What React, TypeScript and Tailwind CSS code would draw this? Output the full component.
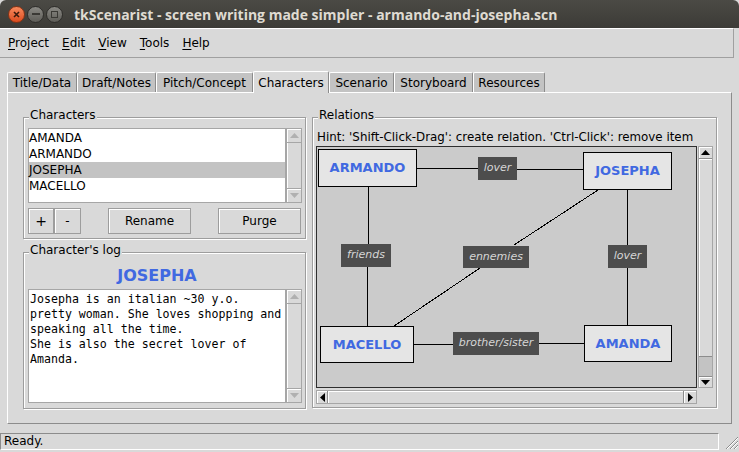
import type { ReactNode } from 'react'

const menus = ['Project', 'Edit', 'View', 'Tools', 'Help']

const tabs = [
  { name: 'Title/Data', w: 'w-[70px]' },
  { name: 'Draft/Notes', w: 'w-[79px]' },
  { name: 'Pitch/Concept', w: 'w-[97px]' },
  { name: 'Characters', w: 'w-[76px]', active: true },
  { name: 'Scenario', w: 'w-[65px]' },
  { name: 'Storyboard', w: 'w-[79px]' },
  { name: 'Resources', w: 'w-[72px]' },
]

const people = ['AMANDA', 'ARMANDO', 'JOSEPHA', 'MACELLO']

const log = [
  'Josepha is an italian ~30 y.o.',
  'pretty woman. She loves shopping and',
  'speaking all the time.',
  'She is also the secret lover of',
  'Amanda.',
]

// canvas items, coordinates relative to the canvas
const nodes = [
  { name: 'ARMANDO', pos: 'left-[2px] top-[3px] w-[99px] h-[38px]' },
  { name: 'JOSEPHA', pos: 'left-[267px] top-[6px] w-[89px] h-[38px]' },
  { name: 'MACELLO', pos: 'left-[4px] top-[180px] w-[94px] h-[37px]' },
  { name: 'AMANDA', pos: 'left-[268px] top-[179px] w-[88px] h-[37px]' },
]

const tags = [
  { name: 'lover', pos: 'left-[162px] top-[11px] w-[39px] h-[23px]' },
  { name: 'friends', pos: 'left-[25px] top-[98px] w-[50px] h-[23px]' },
  { name: 'ennemies', pos: 'left-[147px] top-[100px] w-[66px] h-[22px]' },
  { name: 'lover', pos: 'left-[292px] top-[99px] w-[39px] h-[23px]' },
  { name: 'brother/sister', pos: 'left-[137px] top-[186px] w-[86px] h-[23px]' },
]

const links = [
  [101, 22.5, 162, 22.5],
  [201, 23.5, 267, 23.5],
  [52.5, 41, 52.5, 98],
  [51.5, 121, 51.5, 180],
  [282, 44, 198, 99],
  [164, 122, 78, 180],
  [311.5, 44, 311.5, 99],
  [311.5, 122, 311.5, 179],
  [98, 198.5, 137, 198.5],
  [223, 197.5, 268, 197.5],
]

function Arrow({ dir, color }: { dir: 'up' | 'down' | 'left' | 'right'; color: string }) {
  const d = {
    up: 'M0 5L4.5 0L9 5Z',
    down: 'M0 0L9 0L4.5 5Z',
    left: 'M5 0L5 9L0 4.5Z',
    right: 'M0 0L5 4.5L0 9Z',
  }[dir]
  const vertical = dir === 'up' || dir === 'down'
  return (
    <svg width={vertical ? 9 : 5} height={vertical ? 5 : 9}>
      <path d={d} fill={color} />
    </svg>
  )
}

function LabelFrame({ label, className, children }: { label: string; className: string; children: ReactNode }) {
  return (
    <div className={`relative border border-[#9d9d9d] shadow-[inset_1px_1px_0_#fff,1px_1px_0_#fff] ${className}`}>
      <span className="absolute -top-[11px] left-[5px] bg-[#d9d9d9] px-px text-[12px] leading-[16px] text-black">
        {label}
      </span>
      {children}
    </div>
  )
}

function DeadScroll() {
  return (
    <div className="flex w-[16px] flex-col border border-[#a6a6a6] bg-[#d9d9d9] shadow-[inset_1px_1px_0_#fff]">
      <div className="flex h-[14px] items-center justify-center border-b border-[#a6a6a6] shadow-[inset_1px_1px_0_#fff]">
        <Arrow dir="up" color="#b0b0b0" />
      </div>
      <div className="flex-1" />
      <div className="flex h-[14px] items-center justify-center border-t border-[#a6a6a6] shadow-[inset_1px_1px_0_#fff]">
        <Arrow dir="down" color="#b0b0b0" />
      </div>
    </div>
  )
}

function Button({ children, w, className = '' }: { children: ReactNode; w: string; className?: string }) {
  return (
    <div
      className={`flex h-[26px] items-center justify-center border border-[#9d9d9d] bg-[#d9d9d9] text-[12px] shadow-[inset_1px_1px_0_#fff] ${w} ${className}`}
    >
      {children}
    </div>
  )
}

export default function App() {
  return (
    <div className="flex h-[452px] w-[739px] flex-col overflow-hidden bg-[#d9d9d9] font-['DejaVu_Sans',sans-serif] text-black">
      {/* title bar */}
      <div className="flex h-[28px] shrink-0 items-center rounded-t-[6px] bg-linear-to-b from-[#4b4a45] to-[#3c3b37] pl-[8px]">
        <div className="flex h-[17px] w-[17px] items-center justify-center rounded-full border border-[#8a3314] bg-linear-to-b from-[#f7895c] to-[#dc4b1c]">
          <svg width="7" height="7">
            <path d="M1 1L6 6M6 1L1 6" stroke="#3b1a0c" strokeWidth="1.6" />
          </svg>
        </div>
        <div className="ml-[2px] flex h-[17px] w-[17px] items-center justify-center rounded-full border border-[#2e2d2a] bg-linear-to-b from-[#8a8984] to-[#5e5d58]">
          <div className="h-[2px] w-[8px] bg-[#3a3935]" />
        </div>
        <div className="ml-[2px] flex h-[17px] w-[17px] items-center justify-center rounded-full border border-[#2e2d2a] bg-linear-to-b from-[#8a8984] to-[#5e5d58]">
          <div className="h-[7px] w-[7px] border-[1.5px] border-[#3a3935]" />
        </div>
        <span className="ml-[11px] font-['Open_Sans',sans-serif] text-[14px] font-bold text-[#dfdbd2]">
          tkScenarist - screen writing made simpler - armando-and-josepha.scn
        </span>
      </div>

      {/* menu */}
      <div className="flex h-[30px] w-[734px] shrink-0 items-center border-t border-r border-b border-t-white border-r-[#a0a0a0] border-b-[#a0a0a0] pl-[2px] text-[12px]">
        {menus.map((m) => (
          <span key={m} className="px-[6px] mr-[1px]">
            <span className="underline underline-offset-2">{m[0]}</span>
            {m.slice(1)}
          </span>
        ))}
      </div>

      {/* tabs */}
      <div className="relative z-10 ml-[7px] mt-[13px] flex h-[21px] items-end">
        {tabs.map((t) =>
          t.active ? (
            <div
              key={t.name}
              className={`-mb-px flex h-[22px] items-center justify-center rounded-t-[2px] border-t border-r border-l border-t-white border-l-white border-r-[#8c8c8c] bg-[#d9d9d9] text-[12px] ${t.w}`}
            >
              {t.name}
            </div>
          ) : (
            <div
              key={t.name}
              className={`flex h-[20px] items-center justify-center rounded-t-[2px] border-t border-r border-l border-t-white border-l-white border-r-[#8c8c8c] bg-[#c3c3c3] text-[12px] ${t.w}`}
            >
              {t.name}
            </div>
          )
        )}
      </div>

      {/* notebook pane */}
      <div className="ml-[7px] flex h-[332px] w-[725px] shrink-0 border border-t-white border-l-white border-r-[#8c8c8c] border-b-[#8c8c8c] pt-[24px] pl-[15px]">
        <div className="flex w-[283px] flex-col">
          <LabelFrame label="Characters" className="h-[122px] pl-[4px] pt-[10px]">
            <div className="flex h-[75px]">
              <div className="w-[258px] border border-[#a6a6a6] bg-white pt-px text-[12px]">
                {people.map((p) => (
                  <div key={p} className={`h-[16px] pt-px leading-[14px] ${p === 'JOSEPHA' ? 'bg-[#c3c3c3]' : ''}`}>
                    {p}
                  </div>
                ))}
              </div>
              <DeadScroll />
            </div>
            <div className="mt-[5px] flex">
              <Button w="w-[26px]" className="text-[14px]">
                +
              </Button>
              <Button w="w-[27px]">-</Button>
              <Button w="w-[83px]" className="ml-[27px]">
                Rename
              </Button>
              <Button w="w-[83px]" className="ml-[27px]">
                Purge
              </Button>
            </div>
          </LabelFrame>

          <LabelFrame label="Character's log" className="mt-[13px] h-[157px] pl-[4px] pt-[13px]">
            <div className="w-[258px] text-center text-[16px] leading-[20px] font-bold text-[#4169e1]">JOSEPHA</div>
            <div className="mt-[3px] flex h-[114px]">
              <div className="w-[258px] border border-[#a6a6a6] bg-white pt-[2px] pl-px font-['DejaVu_Sans_Mono',monospace] text-[11.6px] leading-[15px] whitespace-pre">
                {log.map((l) => (
                  <div key={l}>{l}</div>
                ))}
              </div>
              <DeadScroll />
            </div>
          </LabelFrame>
        </div>

        <LabelFrame label="Relations" className="ml-[6px] h-[291px] w-[405px] pl-[3px] pt-[11px]">
          <div className="ml-px h-[16px] text-[11.85px] leading-[16px]">
            Hint: 'Shift-Click-Drag': create relation. 'Ctrl-Click': remove item
          </div>
          <div className="mt-px flex">
            <div className="relative h-[242px] w-[381px] overflow-hidden bg-[#cbcbcb] shadow-[inset_0_0_0_1px_#2e2e2e]">
              <svg className="absolute inset-0" width="381" height="242" shapeRendering="crispEdges">
                {links.map(([x1, y1, x2, y2], i) => (
                  <line key={i} x1={x1} y1={y1} x2={x2} y2={y2} stroke="#000" strokeWidth="1" />
                ))}
              </svg>
              {nodes.map((n) => (
                <div
                  key={n.name}
                  className={`absolute flex items-center justify-center border border-black bg-[#e5e5e5] text-[13px] font-bold text-[#4169e1] ${n.pos}`}
                >
                  {n.name}
                </div>
              ))}
              {tags.map((t, i) => (
                <div
                  key={i}
                  className={`absolute flex items-center justify-center bg-[#4d4d4d] text-[11px] italic text-[#d6d6d6] ${t.pos}`}
                >
                  {t.name}
                </div>
              ))}
            </div>
            <div className="ml-px flex h-[242px] w-[15px] flex-col border border-[#a6a6a6] bg-[#c3c3c3]">
              <div className="flex h-[12px] items-center justify-center border-b border-[#8c8c8c] bg-[#d9d9d9] shadow-[inset_1px_1px_0_#fff]">
                <Arrow dir="up" color="#000" />
              </div>
              <div className="h-[198px] border-b border-[#8c8c8c] bg-[#d9d9d9] shadow-[inset_1px_1px_0_#fff]" />
              <div className="flex-1" />
              <div className="flex h-[11px] items-center justify-center border-t border-[#8c8c8c] bg-[#d9d9d9] shadow-[inset_1px_1px_0_#fff]">
                <Arrow dir="down" color="#000" />
              </div>
            </div>
          </div>
          <div className="mt-[2px] flex h-[14px] w-[381px] border border-[#a6a6a6] bg-[#c3c3c3]">
            <div className="flex w-[11px] items-center justify-center border-r border-[#8c8c8c] bg-[#d9d9d9] shadow-[inset_1px_1px_0_#fff]">
              <Arrow dir="left" color="#000" />
            </div>
            <div className="flex-1 border-r border-[#8c8c8c] bg-[#d9d9d9] shadow-[inset_1px_1px_0_#fff]" />
            <div className="flex w-[12px] items-center justify-center bg-[#d9d9d9] shadow-[inset_1px_1px_0_#fff]">
              <Arrow dir="right" color="#000" />
            </div>
          </div>
        </LabelFrame>
      </div>

      {/* status bar */}
      <div className="mt-[9px] flex items-end">
        <div className="h-[17px] w-[719px] border border-t-[#8c8c8c] border-l-[#8c8c8c] border-r-white border-b-white pl-[3px] text-[12px] leading-[15px]">
          Ready.
        </div>
        <svg width="17" height="17" className="ml-[3px]">
          <path d="M16 4L4 16M16 8L8 16M16 12L12 16" stroke="#8c8c8c" strokeWidth="1" />
          <path d="M16 5L5 16M16 9L9 16M16 13L13 16" stroke="#fff" strokeWidth="1" />
        </svg>
      </div>
    </div>
  )
}
